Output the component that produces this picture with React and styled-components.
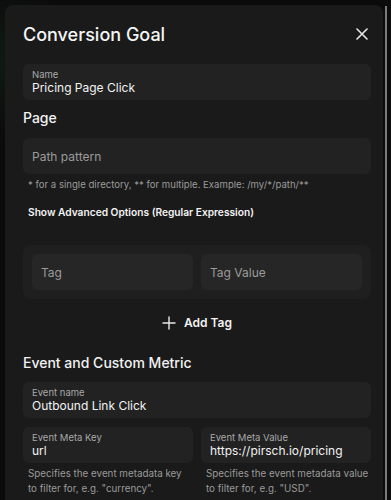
import styled, { createGlobalStyle } from 'styled-components';

const Global = createGlobalStyle`
  html, body {
    margin: 0;
    padding: 0;
    background: #0b0b0b;
    font-family: Inter, 'Noto Sans', sans-serif;
    color: #f2f2f2;
  }
`;

function App() {
  return (
    <>
      <Global />
      <Page>
        <Modal>
          <Header>
            <Title>Conversion Goal</Title>
            <Close aria-label="close">
              <svg width="12" height="12" viewBox="0 0 12 12">
                <path d="M1 1L11 11M11 1L1 11" stroke="#e8e8e8" strokeWidth="1.6" strokeLinecap="round" />
              </svg>
            </Close>
          </Header>
          <Field>
            <Label>Name</Label>
            <Value>Pricing Page Click</Value>
          </Field>
          <Section>Page</Section>
          <Field $mt={10}>
            <Placeholder>Path pattern</Placeholder>
          </Field>
          <Hint $size={9.6}>* for a single directory, ** for multiple. Example: /my/*/path/**</Hint>
          <Advanced>Show Advanced Options (Regular Expression)</Advanced>
          <TagBox>
            <Row>
              <Field $inner>
                <Placeholder>Tag</Placeholder>
              </Field>
              <Field $inner>
                <Placeholder>Tag Value</Placeholder>
              </Field>
            </Row>
          </TagBox>
          <AddTag>
            <svg width="14" height="14" viewBox="0 0 14 14">
              <path d="M7 1V13M1 7H13" stroke="#e8e8e8" strokeWidth="1.4" strokeLinecap="round" />
            </svg>
            Add Tag
          </AddTag>
          <Section $mt={23}>Event and Custom Metric</Section>
          <Field $mt={9}>
            <Label>Event name</Label>
            <Value>Outbound Link Click</Value>
          </Field>
          <Row $mt={9}>
            <Column>
              <Field>
                <Label>Event Meta Key</Label>
                <Value>url</Value>
              </Field>
              <Hint $mt={3}>
                Specifies the event metadata key
                <br />
                to filter for, e.g. "currency".
              </Hint>
            </Column>
            <Column>
              <Field>
                <Label>Event Meta Value</Label>
                <Value>https://pirsch.io/pricing</Value>
              </Field>
              <Hint $mt={3}>
                Specifies the event metadata value
                <br />
                to filter for, e.g. "USD".
              </Hint>
            </Column>
          </Row>
        </Modal>
        <Scrollbar />
      </Page>
    </>
  );
}

const Page = styled.div`
  display: flex;
  height: 500px;
  overflow: hidden;
  padding: 5px 0 0 5px;
  box-sizing: border-box;
  background: radial-gradient(circle at 0 60px, #0f1a12 0, #0b0b0b 80px);
`;

const Modal = styled.div`
  width: 378px;
  min-height: 600px;
  box-sizing: border-box;
  background: #1a1a1a;
  border-radius: 8px 8px 0 0;
  padding: 14px 12px 0 18px;
  display: flex;
  flex-direction: column;
`;

const Scrollbar = styled.div`
  width: 2px;
  margin-left: 2px;
  margin-top: 1px;
  background: #7a7a7a;
`;

const Header = styled.div`
  display: flex;
  align-items: center;
  justify-content: space-between;
  height: 30px;
  margin-bottom: 15px;
`;

const Title = styled.h2`
  margin: 0;
  font-size: 18px;
  font-weight: 500;
  color: #f5f5f5;
`;

const Close = styled.button`
  background: none;
  border: 0;
  padding: 0;
  margin-right: 3px;
  display: flex;
  cursor: pointer;
`;

const Field = styled.div`
  background: ${(p) => (p.$inner ? '#262626' : '#222222')};
  border-radius: 6px;
  height: 36px;
  box-sizing: border-box;
  padding: 0 9px;
  display: flex;
  flex-direction: column;
  justify-content: center;
  margin-top: ${(p) => p.$mt || 0}px;
  flex: ${(p) => (p.$inner ? 1 : 'none')};
`;

const Label = styled.span`
  font-size: 9.5px;
  color: #a8a8a8;
  line-height: 11px;
`;

const Value = styled.span`
  font-size: 12px;
  color: #f2f2f2;
  line-height: 16px;
`;

const Placeholder = styled.span`
  font-size: 12px;
  color: #9a9a9a;
`;

const Section = styled.h3`
  margin: ${(p) => p.$mt || 8}px 0 0 0;
  font-size: 14px;
  font-weight: 500;
  color: #f2f2f2;
  line-height: 20px;
`;

const Hint = styled.p`
  margin: ${(p) => p.$mt ?? 3}px 0 0 5px;
  font-size: ${(p) => p.$size || 9.8}px;
  line-height: 15px;
  color: #9b9b9b;
  white-space: nowrap;
`;

const Advanced = styled.div`
  margin: 14px 0 0 5px;
  font-size: 10.2px;
  font-weight: 600;
  color: #f2f2f2;
`;

const TagBox = styled.div`
  margin-top: 27px;
  background: #1f1f1f;
  border-radius: 8px;
  padding: 9px;
`;

const Row = styled.div`
  display: flex;
  gap: 8px;
  margin-top: ${(p) => p.$mt || 0}px;
`;

const Column = styled.div`
  flex: 1;
  min-width: 0;
  display: flex;
  flex-direction: column;
`;

const AddTag = styled.button`
  align-self: center;
  margin-top: 16px;
  background: none;
  border: 0;
  color: #f2f2f2;
  font-family: inherit;
  font-size: 12px;
  font-weight: 600;
  display: flex;
  align-items: center;
  gap: 8px;
  padding: 0;
`;

export default App;
